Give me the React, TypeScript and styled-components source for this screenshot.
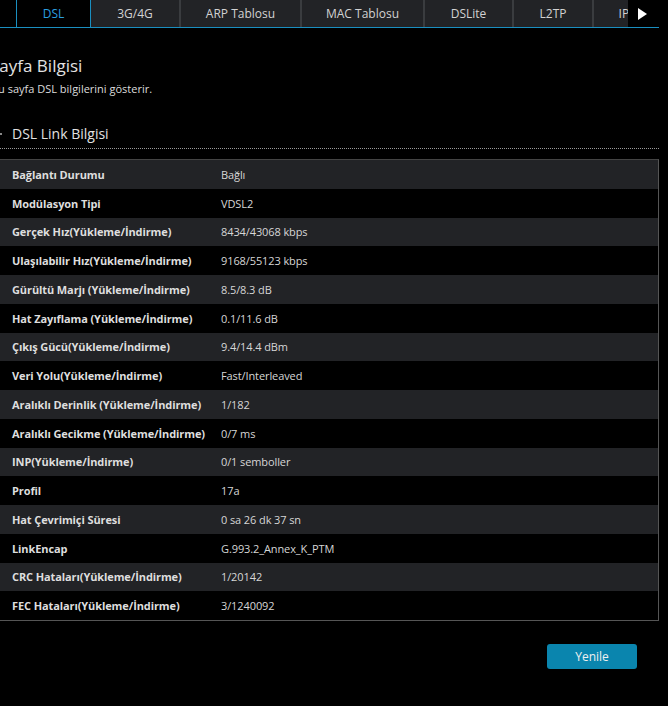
import React from 'react'
import styled, { createGlobalStyle } from 'styled-components'

const GlobalStyle = createGlobalStyle`
  html, body {
    margin: 0;
    padding: 0;
    background: #000;
    overflow: hidden;
  }
  body {
    font-family: 'Open Sans', 'Noto Sans', sans-serif;
    color: #dcdcdc;
  }
`

interface Row {
  label: string
  value: string
}

const rows: Row[] = [
  { label: 'Bağlantı Durumu', value: 'Bağlı' },
  { label: 'Modülasyon Tipi', value: 'VDSL2' },
  { label: 'Gerçek Hız(Yükleme/İndirme)', value: '8434/43068 kbps' },
  { label: 'Ulaşılabilir Hız(Yükleme/İndirme)', value: '9168/55123 kbps' },
  { label: 'Gürültü Marjı (Yükleme/İndirme)', value: '8.5/8.3 dB' },
  { label: 'Hat Zayıflama (Yükleme/İndirme)', value: '0.1/11.6 dB' },
  { label: 'Çıkış Gücü(Yükleme/İndirme)', value: '9.4/14.4 dBm' },
  { label: 'Veri Yolu(Yükleme/İndirme)', value: 'Fast/Interleaved' },
  { label: 'Aralıklı Derinlik (Yükleme/İndirme)', value: '1/182' },
  { label: 'Aralıklı Gecikme (Yükleme/İndirme)', value: '0/7 ms' },
  { label: 'INP(Yükleme/İndirme)', value: '0/1 semboller' },
  { label: 'Profil', value: '17a' },
  { label: 'Hat Çevrimiçi Süresi', value: '0 sa 26 dk 37 sn' },
  { label: 'LinkEncap', value: 'G.993.2_Annex_K_PTM' },
  { label: 'CRC Hataları(Yükleme/İndirme)', value: '1/20142' },
  { label: 'FEC Hataları(Yükleme/İndirme)', value: '3/1240092' },
]

const tabs = [
  { name: 'DSL', width: 75 },
  { name: '3G/4G', width: 90 },
  { name: 'ARP Tablosu', width: 121 },
  { name: 'MAC Tablosu', width: 123 },
  { name: 'DSLite', width: 89 },
  { name: 'L2TP', width: 80 },
  { name: 'IPsec', width: 80 },
]

function App() {
  return (
    <>
      <GlobalStyle />
      <Page>
        <TabBar>
          <TabViewport>
            <TabStrip>
              <TabGutter />
              {tabs.map((t) => (
                <Tab key={t.name} $active={t.name === 'DSL'} $w={t.width}>
                  {t.name}
                </Tab>
              ))}
            </TabStrip>
          </TabViewport>
          <ScrollArrow>
            <svg width="10" height="12" viewBox="0 0 10 12">
              <path d="M1 0 L10 6 L1 12 Z" fill="#fff" />
            </svg>
          </ScrollArrow>
        </TabBar>

        <Content>
          <PageTitle>Sayfa Bilgisi</PageTitle>
          <PageDesc>Bu sayfa DSL bilgilerini gösterir.</PageDesc>

          <SectionHead>
            <Marker />
            <SectionTitle>DSL Link Bilgisi</SectionTitle>
          </SectionHead>

          <InfoTable>
            {rows.map((r, i) => (
              <TableRow key={r.label} $odd={i % 2 === 0}>
                <Label>{r.label}</Label>
                <Value>{r.value}</Value>
              </TableRow>
            ))}
          </InfoTable>

          <Actions>
            <RefreshButton>Yenile</RefreshButton>
          </Actions>
        </Content>
      </Page>
    </>
  )
}

const Page = styled.div`
  width: 659px;
  min-height: 706px;
`

const TabBar = styled.div`
  display: flex;
  height: 28px;
  box-sizing: border-box;
  border-bottom: 1px solid #1a8fc0;
`

const TabViewport = styled.div`
  width: 632px;
  overflow: hidden;
`

const TabStrip = styled.div`
  display: flex;
  height: 27px;
`

const TabGutter = styled.div`
  flex: 0 0 16px;
  background: #000;
`

const Tab = styled.div<{ $active: boolean; $w: number }>`
  flex: 0 0 ${(p) => p.$w}px;
  box-sizing: border-box;
  display: flex;
  align-items: center;
  justify-content: center;
  font-size: 12px;
  background: ${(p) => (p.$active ? '#000' : '#222326')};
  color: ${(p) => (p.$active ? '#2a9fe0' : '#d2d2d2')};
  border-left: ${(p) => (p.$active ? '1px solid #1a8fc0' : 'none')};
  border-right: ${(p) => (p.$active ? '1px solid #1a8fc0' : '2px solid #3a3c3f')};
  margin-bottom: ${(p) => (p.$active ? '-1px' : '0')};
  height: ${(p) => (p.$active ? '28px' : '27px')};
  border-bottom: ${(p) => (p.$active ? '1px solid #2a2a2a' : 'none')};
`

const ScrollArrow = styled.div`
  flex: 0 0 27px;
  display: flex;
  align-items: center;
  justify-content: center;
  background: #000;
  padding-right: 4px;
`

const Content = styled.div`
  padding-top: 27px;
`

const PageTitle = styled.h1`
  margin: 0 0 0 -10px;
  font-size: 17px;
  font-weight: 400;
  line-height: 22px;
  color: #e2e2e2;
`

const PageDesc = styled.p`
  margin: 4px 0 0 -9px;
  font-size: 11px;
  line-height: 16px;
  color: #dcdcdc;
`

const SectionHead = styled.div`
  display: flex;
  align-items: center;
  gap: 10px;
  margin-top: 26px;
  padding-bottom: 3px;
  border-bottom: 1px dotted #9a9a9a;
`

const Marker = styled.span`
  width: 2px;
  height: 2px;
  background: #888;
`

const SectionTitle = styled.h2`
  margin: 0;
  font-size: 14px;
  font-weight: 400;
  line-height: 22px;
  color: #e2e2e2;
`

const InfoTable = styled.div`
  margin-top: 10px;
  border-top: 1px solid #444;
  border-right: 1px solid #555;
  border-bottom: 1px solid #555;
`

const TableRow = styled.div<{ $odd: boolean }>`
  display: grid;
  grid-template-columns: 209px 1fr;
  align-items: center;
  height: 28.75px;
  padding-left: 12px;
  font-size: 11px;
  letter-spacing: -0.1px;
  background: ${(p) => (p.$odd ? '#222326' : '#000')};
`

const Label = styled.span`
  font-weight: 700;
  color: #dedede;
`

const Value = styled.span`
  color: #d6d6d6;
`

const Actions = styled.div`
  display: flex;
  justify-content: flex-end;
  padding: 23px 22px 0 0;
`

const RefreshButton = styled.button`
  width: 90px;
  height: 25px;
  border: none;
  border-radius: 3px;
  background: #0a85ae;
  color: #f0f0f0;
  font-family: 'Open Sans', 'Noto Sans', sans-serif;
  font-size: 12px;
  cursor: pointer;
`

export default App
